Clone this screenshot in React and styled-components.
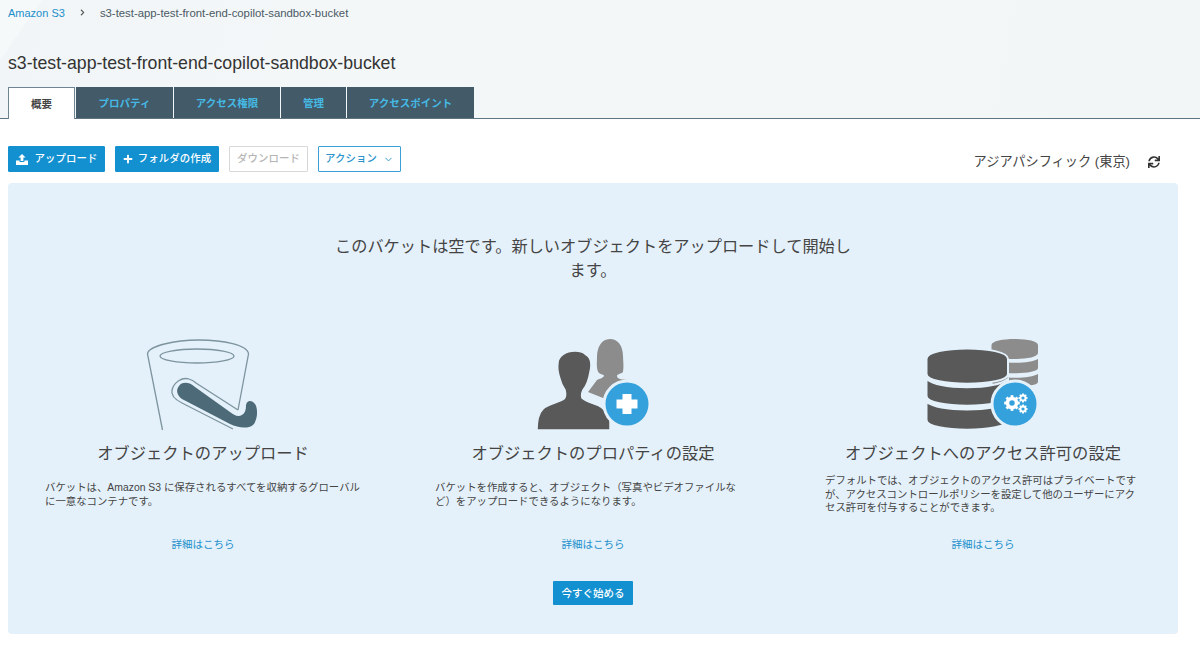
import React from 'react'
import styled, { createGlobalStyle } from 'styled-components'
import { FaPlus, FaSync, FaChevronRight } from 'react-icons/fa'
import { FiChevronDown } from 'react-icons/fi'

const JP = `"Liberation Sans", "Noto Sans CJK JP", sans-serif`

const GlobalStyle = createGlobalStyle`
  html, body {
    margin: 0;
    padding: 0;
    background: #fff;
    font-family: ${JP};
    color: #444;
  }
`

const Header = styled.header`
  height: 118px;
  padding: 0 8px;
  border-bottom: 1px solid #5f7583;
  background:
    linear-gradient(125deg, #f6f9fa 0, #f6f9fa 34px, transparent 35px),
    linear-gradient(100deg, #f1f5f7 0%, #f4f7f8 30%, #f3f6f7 100%);
  display: flex;
  flex-direction: column;
`

const Breadcrumb = styled.nav`
  height: 25px;
  display: flex;
  align-items: center;
  font-size: 11.35px;
  color: #4a5a64;
`

const CrumbLink = styled.a`
  color: #1b8fcb;
  font-size: 11px;
`

const CrumbSeparator = styled.span`
  display: flex;
  margin: 0 14px 0 14px;
  font-size: 7px;
  color: #555;
`

const Title = styled.h1`
  margin: 27px 0 0;
  height: 22px;
  line-height: 22px;
  font-size: 17.7px;
  font-weight: 400;
  color: #333;
`

const Tabs = styled.div`
  display: flex;
  margin-top: 13px;
  height: 31px;
`

const Tab = styled.div`
  width: ${({ $w }) => $w}px;
  height: ${({ $active }) => ($active ? 32 : 31)}px;
  margin-right: 1px;
  padding-bottom: 1px;
  box-sizing: border-box;
  display: flex;
  align-items: center;
  justify-content: center;
  font-size: 10.5px;
  font-weight: 700;
  color: ${({ $active }) => ($active ? '#444' : '#45b9e3')};
  background: ${({ $active }) => ($active ? '#fff' : '#435a68')};
  border: ${({ $active }) => ($active ? '1px solid #6f8492' : 'none')};
  border-bottom: none;
`

const Toolbar = styled.div`
  display: flex;
  align-items: center;
  padding: 27px 0 0 8px;
  height: 26px;
`

const Button = styled.button`
  height: 26px;
  width: ${({ $w }) => $w}px;
  margin-right: 10px;
  padding: 0 0 3px;
  box-sizing: border-box;
  display: flex;
  align-items: center;
  justify-content: center;
  gap: ${({ $gap }) => $gap || 0}px;
  font-family: ${JP};
  font-size: 10.4px;
  font-weight: 500;
  letter-spacing: 0.1px;
  border-radius: 1px;
  background: ${({ $kind }) => ($kind === 'primary' ? '#1290d0' : '#fff')};
  color: ${({ $kind }) =>
    $kind === 'primary' ? '#fff' : $kind === 'disabled' ? '#b5b5b5' : '#2a93ca'};
  border: 1px solid
    ${({ $kind }) =>
      $kind === 'primary' ? '#1290d0' : $kind === 'disabled' ? '#d8d8d8' : '#3a9fd4'};

  svg {
    margin-top: 3px;
  }
`

const Region = styled.div`
  margin-left: auto;
  display: flex;
  align-items: center;
  padding-right: 40px;
  font-size: 13.2px;
  color: #444;
  margin-top: 2px;
`

const RefreshIcon = styled(FaSync)`
  font-size: 12px;
  margin: 3px 0 0 18px;
  color: #333;
`

const Panel = styled.section`
  margin: 11px 22px 0 8px;
  height: 451px;
  border-radius: 4px;
  background: #e4f1fa;
  display: flex;
  flex-direction: column;
  align-items: center;
`

const Heading = styled.h2`
  width: 530px;
  margin: 51px 0 0;
  text-align: center;
  font-size: 16.2px;
  line-height: 24px;
  font-weight: 400;
  color: #444;
`

const Columns = styled.div`
  align-self: stretch;
  display: grid;
  grid-template-columns: repeat(3, 1fr);
  margin-top: 48px;
`

const Column = styled.div`
  display: flex;
  flex-direction: column;
  align-items: center;
`

const Illustration = styled.svg`
  display: block;
  width: ${({ $w }) => $w}px;
  height: 110px;
  margin-left: ${({ $shift }) => $shift}px;
`

const ColumnTitle = styled.h3`
  margin: 0;
  height: 26px;
  line-height: 26px;
  font-size: 16.3px;
  font-weight: 400;
  color: #444;
  white-space: nowrap;
`

const Body = styled.p`
  align-self: stretch;
  margin: 0;
  padding: 0 37px;
  height: 57px;
  display: flex;
  align-items: center;
  font-size: 10.4px;
  line-height: 13.5px;
  color: #444;
`

const MoreLink = styled.a`
  margin-top: 14px;
  font-size: 10.5px;
  line-height: 14px;
  color: #1b8fcb;
`

const StartButton = styled.button`
  width: 80px;
  height: 24px;
  margin-top: 30px;
  padding: 0 0 2px;
  border: none;
  border-radius: 1px;
  background: #1290d0;
  color: #fff;
  font-family: ${JP};
  font-size: 10.5px;
  font-weight: 500;
`

const UploadIcon = () => (
  <svg width="12" height="11" viewBox="0 0 12 11" fill="#fff">
    <path d="M6 0 L9.6 3.6 H7.4 V7 H4.6 V3.6 H2.4 Z" />
    <path d="M0 6.5 H3.6 V8 H8.4 V6.5 H12 V11 H0 Z" />
  </svg>
)

const BucketArt = () => (
  <Illustration viewBox="0 0 160 110" $w={160} $shift={-6}>
    <g fill="none" stroke="#7d949f" strokeWidth="1.3">
      <path d="M42.5 100 L27.5 24 C28 16 55 10 79 10 C103 10 128 15 128.5 24 L118 80" />
      <ellipse cx="77" cy="26" rx="37" ry="7" />
      <path d="M113 99 L62 73 C54 69 51 64 52 60 C54 52 62 47 69 49 C72 50 74 51 76 53 L118 80" />
    </g>
    <path
      d="M75 57 C70 52 62 51 59 56 C55 61 58 66 62 69 L110 94 C118 98 128 99 133 95 C138 90 138 78 135 74 C132 70 127 70 126 75 C126 80 125 85 119 86 C115 86 113 84 110 82 Z"
      fill="#4c6a78"
    />
  </Illustration>
)

const PeopleArt = () => (
  <Illustration viewBox="0 0 150 110" $w={150} $shift={4}>
    <path
      d="M90 9 C81 9 77 18 77 27 C77 33 76 39 79 43 C81 45 84 44 84 46 C83 48 79 49 77 50 L68 62 L88 70 L110 50 C102 50 97 49 97 46 C97 44 101 44 103 42 C104 36 103 30 103 26 C103 16 98 9 90 9 Z"
      fill="#8c8c8c"
    />
    <path
      d="M55 21 C46 21 38 26 38 33 C37 38 38 43 40 49 C41 54 43 57 45 60 C46 64 46 67 44 69 C38 73 28 74 23 79 C18 84 17 92 17 100 H90 V92 C90 86 86 81 81 77 C76 74 66 72 62 68 C61 65 62 62 63 60 C67 55 69 48 70 42 C72 34 71 27 65 24 C62 21 58 21 55 21 Z"
      fill="#595959"
      stroke="#e4f1fa"
      strokeWidth="1.5"
    />
    <circle cx="107" cy="74" r="23" fill="#35a1dc" stroke="#e4f1fa" strokeWidth="3" />
    <path d="M102.5 64 H111.5 V69.5 H117.5 V78.5 H111.5 V84 H102.5 V78.5 H96.5 V69.5 H102.5 Z" fill="#fff" />
  </Illustration>
)

const Gear = ({ cx, cy, r }) => (
  <g transform={`translate(${cx} ${cy})`}>
    <circle r={r * 0.72} fill="none" stroke="#fff" strokeWidth={r * 0.5} />
    {[0, 45, 90, 135].map(a => (
      <rect key={a} x={-r * 0.22} y={-r * 1.2} width={r * 0.44} height={r * 2.4} fill="#fff" transform={`rotate(${a})`} />
    ))}
    <circle r={r * 0.42} fill="#35a1dc" />
  </g>
)

const DatabaseArt = () => (
  <Illustration viewBox="0 0 150 110" $w={150} $shift={4}>
    <g fill="#8c8c8c">
      <path d="M81.5 15 C81.5 7 128 7 128 15 V23 C128 31 81.5 31 81.5 23 Z" />
      <path d="M81.5 29 C90 34 120 34 128 29 V38 C128 45 81.5 45 81.5 38 Z" />
      <path d="M81.5 44 C90 49 120 49 128 44 V52 C128 58 81.5 58 81.5 52 Z" />
    </g>
    <g fill="#595959" stroke="#e4f1fa" strokeWidth="2">
      <path d="M16.5 29 C16.5 15 98 15 98 29 V44 C98 57 16.5 57 16.5 44 Z" />
      <path d="M16.5 49 C30 60 84 60 98 49 V66 C98 79 16.5 79 16.5 66 Z" />
      <path d="M16.5 72 C30 82 84 82 98 72 V90 C98 103 16.5 103 16.5 90 Z" />
    </g>
    <circle cx="105" cy="74" r="23" fill="#35a1dc" stroke="#e4f1fa" strokeWidth="3" />
    <Gear cx={102} cy={73} r={6.5} />
    <Gear cx={113} cy={68} r={3.8} />
    <Gear cx={113} cy={79} r={3.8} />
  </Illustration>
)

const columns = [
  {
    title: 'オブジェクトのアップロード',
    art: <BucketArt />,
    body: 'バケットは、Amazon S3 に保存されるすべてを収納するグローバルに一意なコンテナです。',
  },
  {
    title: 'オブジェクトのプロパティの設定',
    art: <PeopleArt />,
    body: 'バケットを作成すると、オブジェクト（写真やビデオファイルなど）をアップロードできるようになります。',
  },
  {
    title: 'オブジェクトへのアクセス許可の設定',
    art: <DatabaseArt />,
    body: 'デフォルトでは、オブジェクトのアクセス許可はプライベートですが、アクセスコントロールポリシーを設定して他のユーザーにアクセス許可を付与することができます。',
  },
]

const tabs = [
  { label: '概要', w: 67, active: true },
  { label: 'プロパティ', w: 97 },
  { label: 'アクセス権限', w: 106 },
  { label: '管理', w: 65 },
  { label: 'アクセスポイント', w: 127 },
]

export default function App() {
  return (
    <>
      <GlobalStyle />
      <Header>
        <Breadcrumb>
          <CrumbLink>Amazon S3</CrumbLink>
          <CrumbSeparator>
            <FaChevronRight />
          </CrumbSeparator>
          <span>s3-test-app-test-front-end-copilot-sandbox-bucket</span>
        </Breadcrumb>
        <Title>s3-test-app-test-front-end-copilot-sandbox-bucket</Title>
        <Tabs>
          {tabs.map(t => (
            <Tab key={t.label} $w={t.w} $active={t.active}>
              {t.label}
            </Tab>
          ))}
        </Tabs>
      </Header>
      <Toolbar>
        <Button $kind="primary" $w={97} $gap={7}>
          <UploadIcon />
          アップロード
        </Button>
        <Button $kind="primary" $w={104} $gap={5}>
          <FaPlus size={10} />
          フォルダの作成
        </Button>
        <Button $kind="disabled" $w={79}>
          ダウンロード
        </Button>
        <Button $kind="outline" $w={83} $gap={6}>
          アクション
          <FiChevronDown size={11} />
        </Button>
        <Region>
          アジアパシフィック (東京)
          <RefreshIcon />
        </Region>
      </Toolbar>
      <Panel>
        <Heading>このバケットは空です。新しいオブジェクトをアップロードして開始します。</Heading>
        <Columns>
          {columns.map(c => (
            <Column key={c.title}>
              {c.art}
              <ColumnTitle>{c.title}</ColumnTitle>
              <Body>
                <span>{c.body}</span>
              </Body>
              <MoreLink>詳細はこちら</MoreLink>
            </Column>
          ))}
        </Columns>
        <StartButton>今すぐ始める</StartButton>
      </Panel>
    </>
  )
}
